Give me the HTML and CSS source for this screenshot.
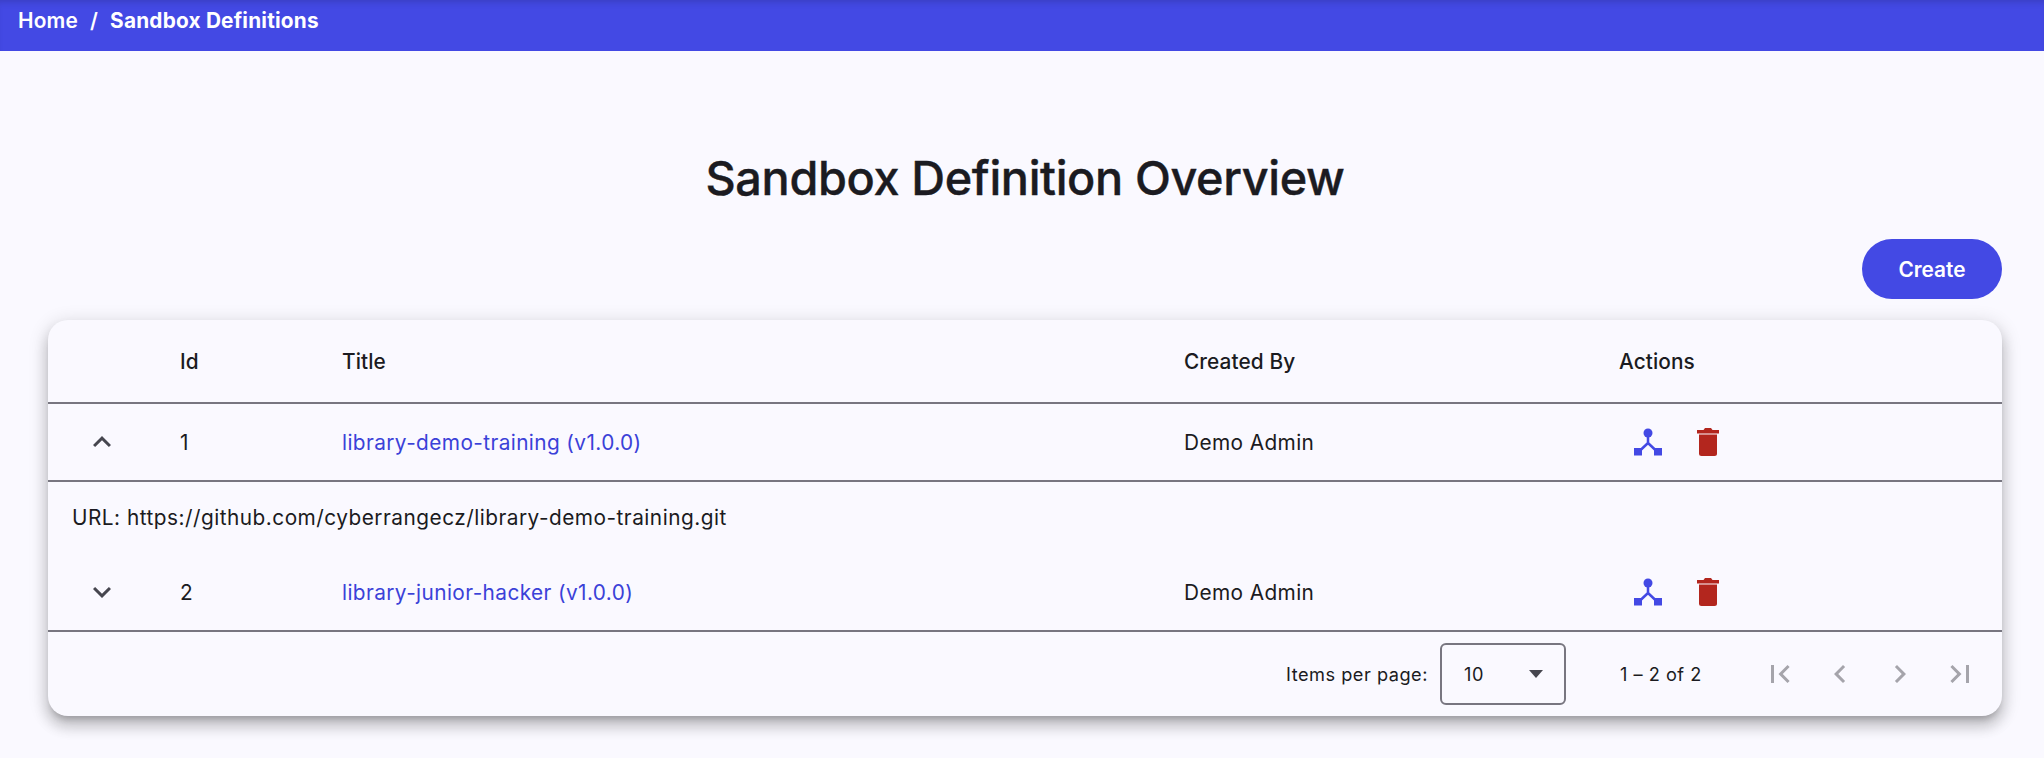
FILE: index.html
```html
<!DOCTYPE html>
<html lang="en">
<head>
<meta charset="utf-8">
<title>Sandbox Definition Overview</title>
<link rel="stylesheet" href="styles.css">
</head>
<body>
<header class="toolbar">
  <nav class="crumbs"><span>Home</span><span class="sep">/</span><strong>Sandbox Definitions</strong></nav>
</header>
<main class="content">
  <h1 class="title">Sandbox Definition Overview</h1>
  <div class="controls"><button class="create">Create</button></div>
  <section class="card">
    <div class="row head">
      <div></div><div>Id</div><div>Title</div><div>Created By</div><div>Actions</div>
    </div>
    <div class="row body">
      <div class="chev"><svg viewBox="0 0 24 24"><path d="M12 8l-6 6 1.410 1.410L12 10.830l4.590 4.580L18 14z"/></svg></div>
      <div>1</div>
      <div class="link">library-demo-training (v1.0.0)</div>
      <div>Demo Admin</div>
      <div class="actions">
        <svg class="ic-blue" viewBox="0 0 30 30"><circle cx="15" cy="6" r="4.500"/><path class="branch" d="M15 8V16M15 16L6 24.500M15 16L24 24.500"/><rect x="1" y="21" width="8" height="7.500"/><rect x="21" y="21" width="8" height="7.500"/></svg>
        <svg class="ic-red" viewBox="0 0 30 30"><path d="M6 7.500h18v19a2.500 2.500 0 0 1-2.500 2.500h-13a2.500 2.500 0 0 1-2.500-2.500z"/><path d="M4 3h6.500l1.500-2h6l1.500 2H26v3.500H4z"/></svg>
      </div>
    </div>
    <div class="detail">URL: https://github.com/cyberrangecz/library-demo-training.git</div>
    <div class="row body">
      <div class="chev"><svg viewBox="0 0 24 24"><path d="M16.590 8.590L12 13.170 7.410 8.590 6 10l6 6 6-6z"/></svg></div>
      <div>2</div>
      <div class="link">library-junior-hacker (v1.0.0)</div>
      <div>Demo Admin</div>
      <div class="actions">
        <svg class="ic-blue" viewBox="0 0 30 30"><circle cx="15" cy="6" r="4.500"/><path class="branch" d="M15 8V16M15 16L6 24.500M15 16L24 24.500"/><rect x="1" y="21" width="8" height="7.500"/><rect x="21" y="21" width="8" height="7.500"/></svg>
        <svg class="ic-red" viewBox="0 0 30 30"><path d="M6 7.500h18v19a2.500 2.500 0 0 1-2.500 2.500h-13a2.500 2.500 0 0 1-2.500-2.500z"/><path d="M4 3h6.500l1.500-2h6l1.500 2H26v3.500H4z"/></svg>
      </div>
    </div>
    <footer class="pager">
      <span class="per-label">Items per page:</span>
      <div class="select"><span>10</span><i class="caret"></i></div>
      <span class="range">1 – 2 of 2</span>
      <div class="pager-btns">
        <svg viewBox="0 0 24 24"><path d="M18.410 16.590L13.830 12l4.580-4.590L17 6l-6 6 6 6zM6 6h2v12H6z"/></svg>
        <svg viewBox="0 0 24 24"><path d="M15.410 7.410L14 6l-6 6 6 6 1.410-1.410L10.830 12z"/></svg>
        <svg viewBox="0 0 24 24"><path d="M10 6L8.590 7.410 13.170 12l-4.580 4.590L10 18l6-6z"/></svg>
        <svg viewBox="0 0 24 24"><path d="M5.590 7.410L10.170 12l-4.580 4.590L7 18l6-6-6-6zM16 6h2v12h-2z"/></svg>
      </div>
    </footer>
  </section>
</main>
</body>
</html>
```
FILE: styles.css
```css
* { box-sizing: border-box; }
html, body { margin: 0; height: 100%; }
body {
  background: #faf9ff;
  color: #1b1b21;
  font-family: Inter, "Liberation Sans", sans-serif;
  overflow: hidden;
}
.toolbar {
  height: 51px;
  background: #4349e4;
  box-shadow: inset 0 6px 6px -4px rgba(30, 30, 90, 0.25);
  color: #fff;
  padding: 9px 18px 0;
  font-size: 20.800px;
  line-height: 24px;
  letter-spacing: 0.2px;
}
.crumbs { display: flex; align-items: center; }
.crumbs strong { font-weight: 700; }
.crumbs span { font-weight: 600; }
.sep { margin: 0 12px; }
.content { padding: 0 42px 0 48px; }
.title {
  margin: 0;
  padding-top: 97px;
  height: 188px;
  text-align: center;
  font-size: 46.800px;
  line-height: 60px;
  font-weight: 500;
  letter-spacing: -0.35px;
  -webkit-text-stroke: 0.4px #1b1b21;
}
.controls { display: flex; justify-content: flex-end; height: 81px; }
.create {
  width: 140px;
  height: 60px;
  border: 0;
  border-radius: 30px;
  background: #4349e4;
  color: #fff;
  font: 600 20.800px Inter, "Liberation Sans", sans-serif;
}
.card {
  height: 396px;
  background: #faf9ff;
  border-radius: 20px;
  box-shadow: 0 6.500px 6.500px -4px rgba(0, 0, 0, 0.2), 0 10.400px 13px 1.300px rgba(0, 0, 0, 0.14), 0 4px 18px 2.600px rgba(0, 0, 0, 0.12);
  font-size: 20.800px;
  letter-spacing: 0.4px;
}
.row {
  display: grid;
  grid-template-columns: 132px 162px 842px 435px 1fr;
  align-items: center;
  border-bottom: 2px solid #787680;
}
.head { height: 84px; font-weight: 500; letter-spacing: 0.1px; }
.body { height: 78px; }
.chev { display: flex; padding-left: 36px; }
.chev svg { fill: #46464f; width: 36px; height: 36px; }
.link { color: #3a41d8; }
.actions { display: flex; align-items: center; gap: 30px; padding-left: 14px; }
.actions svg { width: 30px; height: 30px; }
.ic-blue { fill: #4349e4; }
.ic-blue .branch { fill: none; stroke: #4349e4; stroke-width: 2.500; }
.ic-red { fill: #b3261e; }
.detail { height: 72px; padding: 23px 0 0 24px; line-height: 26px; letter-spacing: 0.49px; }
.pager {
  display: flex;
  align-items: center;
  height: 84px;
  font-size: 18.200px;
  padding-left: 1238px;
  letter-spacing: 0.5px;
}
.per-label { width: 154px; }
.select {
  width: 126px;
  height: 62px;
  border: 2px solid #787680;
  border-radius: 6px;
  display: flex;
  align-items: center;
  justify-content: space-between;
  padding: 0 21px 0 22px;
}
.caret {
  width: 0;
  height: 0;
  border-left: 7.500px solid transparent;
  border-right: 7.500px solid transparent;
  border-top: 8px solid #46464f;
}
.range { margin-left: 54px; width: 142px; }
.pager-btns { display: flex; gap: 24px; }
.pager-btns svg { width: 36px; height: 36px; fill: #a5a4ab; }
```
